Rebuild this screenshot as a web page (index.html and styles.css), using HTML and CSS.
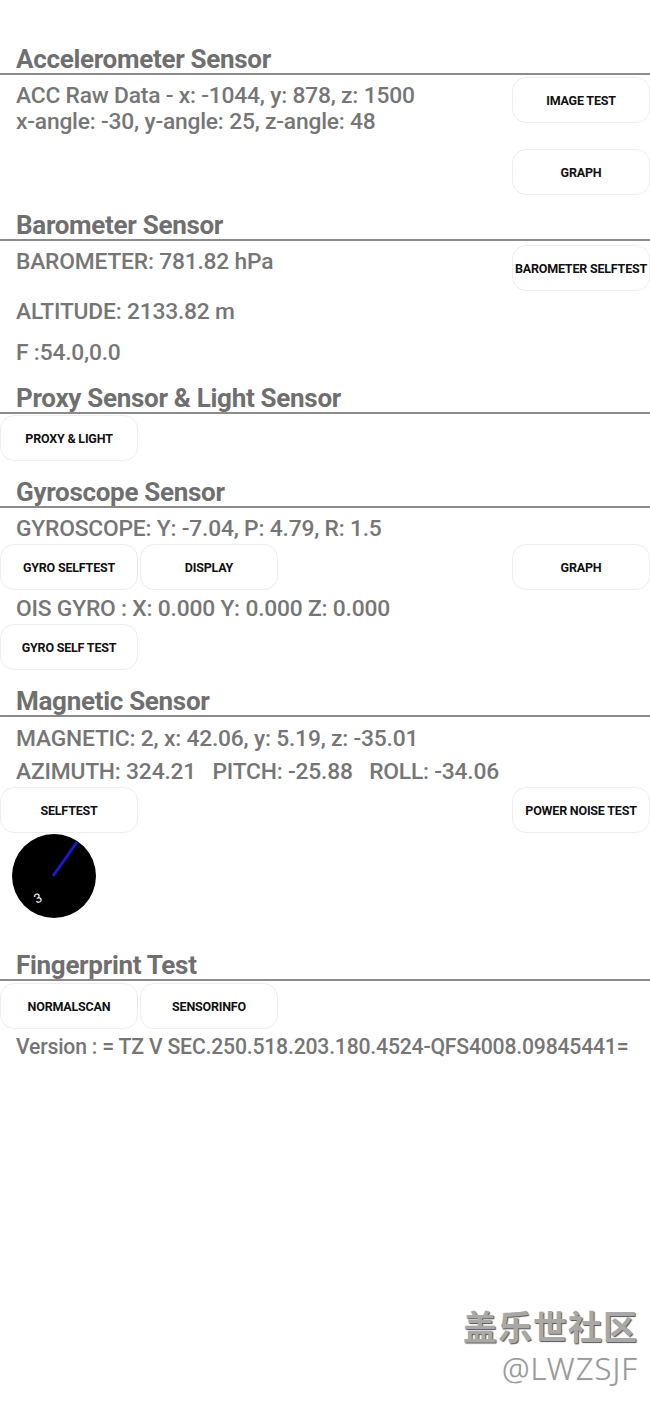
FILE: index.html
```html
<!DOCTYPE html>
<html>
<head>
<meta charset="utf-8">
<link rel="stylesheet" href="styles.css">
</head>
<body>
<div class="page">
  <h2 class="sec">Accelerometer Sensor</h2>
  <div class="row">
    <div class="col">
      <p class="val acc1">ACC Raw Data - x: -1044, y: 878, z: 1500</p>
      <p class="val acc2">x-angle: -30, y-angle: 25, z-angle: 48</p>
    </div>
    <div class="btncol">
      <button class="btn">IMAGE TEST</button>
      <button class="btn">GRAPH</button>
    </div>
  </div>

  <h2 class="sec sec-baro">Barometer Sensor</h2>
  <div class="row">
    <div class="col">
      <p class="val baro1">BAROMETER: 781.82 hPa</p>
      <p class="val baro2">ALTITUDE: 2133.82 m</p>
      <p class="val baro3">F :54.0,0.0</p>
    </div>
    <div class="btncol btncol-baro">
      <button class="btn">BAROMETER SELFTEST</button>
    </div>
  </div>

  <h2 class="sec sec-proxy">Proxy Sensor &amp; Light Sensor</h2>
  <div class="btnrow btnrow-proxy">
    <button class="btn">PROXY &amp; LIGHT</button>
  </div>

  <h2 class="sec sec-gyro">Gyroscope Sensor</h2>
  <p class="val gyro1">GYROSCOPE: Y: -7.04, P: 4.79, R: 1.5</p>
  <div class="btnrow">
    <button class="btn">GYRO SELFTEST</button>
    <button class="btn">DISPLAY</button>
    <span class="spacer"></span>
    <button class="btn">GRAPH</button>
  </div>
  <p class="val gyro2">OIS GYRO : X: 0.000 Y: 0.000 Z: 0.000</p>
  <div class="btnrow">
    <button class="btn">GYRO SELF TEST</button>
  </div>

  <h2 class="sec sec-mag">Magnetic Sensor</h2>
  <p class="val mag1">MAGNETIC: 2, x: 42.06, y: 5.19, z: -35.01</p>
  <p class="val mag2">AZIMUTH: 324.21&nbsp;&nbsp;&nbsp;PITCH: -25.88&nbsp;&nbsp;&nbsp;ROLL: -34.06</p>
  <div class="btnrow">
    <button class="btn">SELFTEST</button>
    <span class="spacer"></span>
    <button class="btn">POWER NOISE TEST</button>
  </div>
  <div class="compass">
    <svg width="86" height="86" viewBox="0 0 86 86">
      <circle cx="43" cy="42" r="42" fill="#000"/>
      <line x1="42" y1="42" x2="66" y2="8" stroke="#1a1acc" stroke-width="3"/>
      <text x="23" y="68" fill="#fff" font-family="Roboto, sans-serif" font-size="13" transform="rotate(-25 28 63)">3</text>
    </svg>
  </div>

  <h2 class="sec sec-fp">Fingerprint Test</h2>
  <div class="btnrow">
    <button class="btn">NORMALSCAN</button>
    <button class="btn">SENSORINFO</button>
  </div>
  <p class="val ver">Version : = TZ V SEC.250.518.203.180.4524-QFS4008.09845441=</p>

  <div class="watermark">
    <div class="wm1">盖乐世社区</div>
    <div class="wm2">@LWZSJF</div>
  </div>
</div>
</body>
</html>
```

FILE: styles.css
```css
html, body {
  margin: 0;
  padding: 0;
  background: #fff;
}
.page {
  position: relative;
  width: 650px;
  height: 1408px;
  box-sizing: border-box;
  padding-top: 44px;
  overflow: hidden;
  font-family: Roboto, "Liberation Sans", sans-serif;
  color: #747474;
}
.sec {
  margin: 0;
  padding-left: 16px;
  height: 29px;
  line-height: 30px;
  font-size: 26px;
  font-weight: 700;
  color: #6f6f6f;
  border-bottom: 2px solid #8c8c8c;
  letter-spacing: -0.3px;
  white-space: nowrap;
}
.row {
  display: flex;
  justify-content: space-between;
}
.col {
  display: flex;
  flex-direction: column;
}
.val {
  margin: 0;
  padding-left: 16px;
  font-size: 22.8px;
  line-height: 26px;
  font-weight: 500;
  color: #767676;
  letter-spacing: -0.2px;
  white-space: nowrap;
}
.acc1 { margin-top: 8px; }
.baro1 { margin-top: 8px; }
.baro2 { margin-top: 24px; }
.baro3 { margin-top: 15px; }
.btncol {
  display: flex;
  flex-direction: column;
  gap: 26px;
  padding-top: 2px;
}
.btncol-baro { padding-top: 4px; }
.btn {
  width: 138px;
  height: 46px;
  margin: 0;
  padding: 0;
  background: #fff;
  border: 1px solid #ededed;
  border-radius: 14px;
  font-family: Roboto, "Liberation Sans", sans-serif;
  font-size: 12.5px;
  font-weight: 700;
  color: #111;
  white-space: nowrap;
  letter-spacing: -0.2px;
}
.btnrow {
  display: flex;
  gap: 2px;
  padding-top: 2px;
}
.btnrow-proxy { padding-top: 1px; }
.spacer { flex: 1; }
.sec-baro { margin-top: 15px; }
.sec-proxy { margin-top: 17px; }
.sec-gyro { margin-top: 16px; }
.gyro1 { margin-top: 8px; }
.gyro2 { margin-top: 6px; }
.sec-mag { margin-top: 16px; }
.mag1 { margin-top: 9px; }
.mag2 { margin-top: 7px; }
.compass {
  padding: 1px 0 0 11px;
  height: 86px;
}
.compass svg { display: block; }
.sec-fp { margin-top: 30px; }
.ver {
  margin-top: 5px;
  font-size: 21.2px;
}
.watermark {
  position: absolute;
  right: 12px;
  top: 1304px;
  text-align: right;
}
.wm1 {
  font-family: "Noto Sans CJK SC", sans-serif;
  font-size: 34px;
  line-height: 44px;
  font-weight: 700;
  color: #a8a8a8;
  letter-spacing: 1px;
  text-shadow: 1px 1px 1px #555;
}
.wm2 {
  font-family: "Noto Sans", sans-serif;
  font-size: 31px;
  line-height: 40px;
  font-weight: 300;
  letter-spacing: 1px;
  color: #9a9a9a;
  text-shadow: 0 0 1px #ccc;
}
```
